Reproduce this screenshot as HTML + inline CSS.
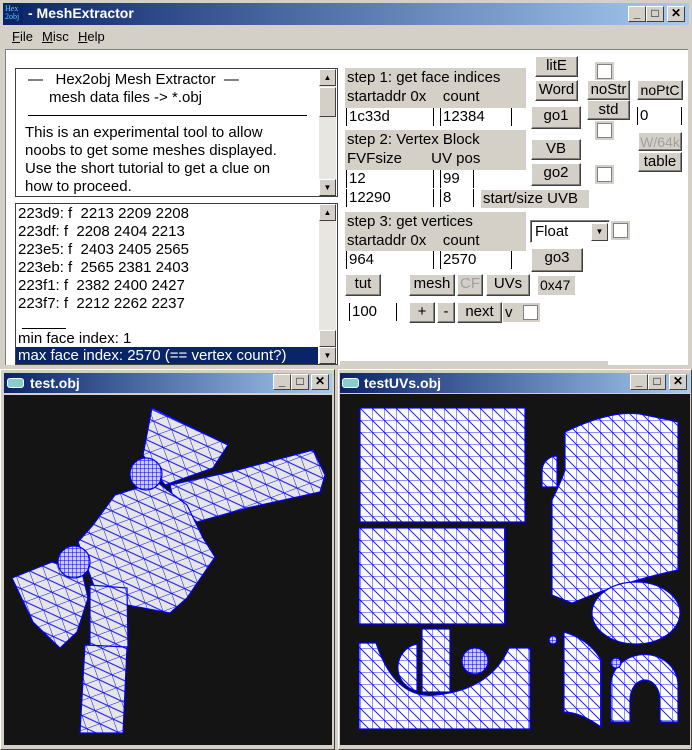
<!DOCTYPE html>
<html><head><meta charset="utf-8"><style>
*{margin:0;padding:0;box-sizing:border-box}
body{width:692px;height:750px;overflow:hidden;background:#d4d0c8;font-family:"Liberation Sans",sans-serif;position:relative}
.a{position:absolute}
.tb{position:absolute;background:linear-gradient(90deg,#0a246a,#a6caf0);color:#fff;font-weight:bold;font-size:14px;line-height:20px}
.btn{position:absolute;background:#d4d0c8;border:1px solid;border-color:#fff #404040 #404040 #fff;box-shadow:inset -1px -1px #808080;font-size:15px;text-align:center;color:#000;line-height:18px}
.wb{position:absolute;width:18px;height:16px;background:#d4d0c8;border:1px solid;border-color:#fff #404040 #404040 #fff;font-size:12px;line-height:13px;text-align:center;font-weight:bold;color:#000}
.lbl{position:absolute;background:#d4d0c8;font-size:15px;line-height:19px;padding-left:2px;color:#000}
.inp{position:absolute;background:#fff;border-left:1px solid #000;border-right:1px solid #000;font-size:15px;line-height:17px;padding-left:2px;height:18px}
.cb{position:absolute;width:15px;height:15px;background:#fff;border:1px solid #808080;outline:2px solid #d4d0c8}
.sb{position:absolute;width:17px;background:#e8e6e0}
.sa{position:absolute;width:17px;height:17px;background:#d4d0c8;border:1px solid;border-color:#fff #404040 #404040 #fff;font-size:8px;line-height:15px;text-align:center}
.txt{font-size:15px;line-height:18px;color:#000}
</style></head><body>
<div class="tb" style="left:3px;top:3px;width:686px;height:22px;padding-left:25px">- MeshExtractor</div>
<div class="a" style="left:5px;top:5px;width:18px;height:18px;background:#0a246a;color:#6cf;font-size:8px;line-height:8px;font-family:'Liberation Serif'">Hex<br>2obj</div>
<div class="wb" style="left:628px;top:6px">_</div><div class="wb" style="left:646px;top:6px">□</div><div class="wb" style="left:667px;top:6px">✕</div>
<div class="a" style="left:12px;top:29px;font-size:13px"><u>F</u>ile</div>
<div class="a" style="left:42px;top:29px;font-size:13px"><u>M</u>isc</div>
<div class="a" style="left:78px;top:29px;font-size:13px"><u>H</u>elp</div>
<div class="a" style="left:5px;top:49px;width:683px;height:316px;background:#fff;border-top:1px solid #808080;border-left:1px solid #808080"></div>
<div class="a" style="left:15px;top:68px;width:323px;height:129px;border:1px solid #404040;background:#fff;overflow:hidden">
 <div class="txt" style="position:absolute;left:12px;top:2px">—&nbsp;&nbsp; Hex2obj Mesh Extractor&nbsp; —</div>
 <div class="txt" style="position:absolute;left:33px;top:20px">mesh data files -&gt; *.obj</div>
 <div style="position:absolute;left:12px;top:46px;width:279px;border-top:1px solid #000"></div>
 <div class="txt" style="position:absolute;left:9px;top:55px">This is an experimental tool to allow<br>noobs to get some meshes displayed.<br>Use the short tutorial to get a clue on<br>how to proceed.</div>
 <div class="sb" style="left:303px;top:0;height:127px"></div>
 <div class="sa" style="left:303px;top:0">▲</div>
 <div class="sa" style="left:303px;top:18px;height:30px"></div>
 <div class="sa" style="left:303px;top:110px">▼</div>
</div>
<div class="a" style="left:15px;top:203px;width:323px;height:162px;border:1px solid #404040;background:#fff;overflow:hidden">
 <div class="txt" style="position:absolute;left:2px;top:1px">223d9: f&nbsp; 2213 2209 2208<br>223df: f&nbsp; 2208 2404 2213<br>223e5: f&nbsp; 2403 2405 2565<br>223eb: f&nbsp; 2565 2381 2403<br>223f1: f&nbsp; 2382 2400 2427<br>223f7: f&nbsp; 2212 2262 2237</div>
 <div style="position:absolute;left:6px;top:124px;width:44px;border-top:1px solid #000"></div>
 <div class="txt" style="position:absolute;left:2px;top:126px">min face index: 1</div>
 <div class="txt" style="position:absolute;left:0;top:143px;width:302px;height:18px;background:#0a246a;color:#fff;padding-left:2px">max face index: 2570 (== vertex count?)</div>
 <div class="sb" style="left:303px;top:0;height:160px"></div>
 <div class="sa" style="left:303px;top:0">▲</div>
 <div class="sa" style="left:303px;top:126px;height:17px"></div>
 <div class="sa" style="left:303px;top:143px">▼</div>
</div>
<div class="lbl" style="left:345px;top:68px;width:181px;height:40px">step 1: get face indices<br>startaddr 0x&nbsp;&nbsp;&nbsp; count</div>
<div class="inp" style="left:346px;top:108px;width:88px">1c33d</div>
<div class="inp" style="left:440px;top:108px;width:72px">12384</div>
<div class="btn" style="left:535px;top:56px;width:43px;height:21px">litE</div>
<div class="btn" style="left:535px;top:80px;width:43px;height:21px">Word</div>
<div class="btn" style="left:531px;top:106px;width:50px;height:23px">go1</div>
<div class="cb" style="left:597px;top:64px"></div>
<div class="btn" style="left:587px;top:80px;width:43px;height:20px">noStr</div>
<div class="btn" style="left:587px;top:100px;width:43px;height:20px">std</div>
<div class="cb" style="left:597px;top:123px"></div>
<div class="btn" style="left:637px;top:80px;width:46px;height:20px;font-size:14px">noPtC</div>
<div class="inp" style="left:637px;top:107px;width:45px">0</div>
<div class="btn" style="left:638px;top:132px;width:44px;height:19px;color:#a0a0a0;font-size:14px">W/64k</div>
<div class="btn" style="left:638px;top:152px;width:44px;height:20px">table</div>
<div class="lbl" style="left:345px;top:130px;width:181px;height:40px">step 2: Vertex Block<br>FVFsize&nbsp;&nbsp;&nbsp;&nbsp;&nbsp;&nbsp; UV pos</div>
<div class="inp" style="left:346px;top:170px;width:88px">12</div>
<div class="inp" style="left:440px;top:170px;width:34px">99</div>
<div class="inp" style="left:346px;top:189px;width:88px">12290</div>
<div class="inp" style="left:440px;top:189px;width:34px">8</div>
<div class="lbl" style="left:481px;top:190px;width:108px;height:18px;line-height:18px">start/size UVB</div>
<div class="btn" style="left:531px;top:139px;width:50px;height:21px">VB</div>
<div class="btn" style="left:531px;top:163px;width:50px;height:23px">go2</div>
<div class="cb" style="left:597px;top:167px"></div>
<div class="lbl" style="left:345px;top:212px;width:181px;height:39px">step 3: get vertices<br>startaddr 0x&nbsp;&nbsp;&nbsp; count</div>
<div class="a" style="left:530px;top:220px;width:80px;height:23px;background:#fff;border:1px solid;border-color:#808080 #fff #fff #808080;box-shadow:inset 1px 1px #404040;font-size:15px;line-height:21px;padding-left:4px">Float<div class="sa" style="left:60px;top:2px;height:18px;width:17px">▼</div></div>
<div class="cb" style="left:613px;top:223px"></div>
<div class="inp" style="left:346px;top:251px;width:88px">964</div>
<div class="inp" style="left:440px;top:251px;width:72px">2570</div>
<div class="btn" style="left:531px;top:248px;width:52px;height:24px">go3</div>
<div class="btn" style="left:345px;top:274px;width:36px;height:22px">tut</div>
<div class="btn" style="left:409px;top:274px;width:46px;height:22px">mesh</div>
<div class="btn" style="left:457px;top:274px;width:26px;height:22px;color:#a0a0a0">CF</div>
<div class="btn" style="left:486px;top:274px;width:44px;height:22px">UVs</div>
<div class="lbl" style="left:538px;top:276px;width:37px;height:19px;font-size:14px">0x47</div>
<div class="inp" style="left:349px;top:303px;width:48px">100</div>
<div class="btn" style="left:409px;top:302px;width:26px;height:21px">+</div>
<div class="btn" style="left:437px;top:302px;width:18px;height:21px">-</div>
<div class="btn" style="left:457px;top:302px;width:45px;height:21px">next</div>
<div class="lbl" style="left:503px;top:303px;width:18px;height:19px">v</div>
<div class="cb" style="left:523px;top:305px"></div>
<div class="a" style="left:340px;top:361px;width:268px;height:5px;background:#d4d0c8"></div>

<div class="a" style="left:0;top:369px;width:335px;height:381px;background:#d4d0c8;border:1px solid;border-color:#fff #404040 #404040 #fff"></div>
<div class="tb" style="left:4px;top:373px;width:328px;height:20px;padding-left:26px">test.obj</div>
<div class="a" style="left:7px;top:378px;width:17px;height:10px;background:#8cc;border:1px solid #fff;border-radius:3px"></div>
<div class="wb" style="left:273px;top:374px">_</div><div class="wb" style="left:291px;top:374px">□</div><div class="wb" style="left:311px;top:374px">✕</div>
<div class="a" style="left:338px;top:369px;width:354px;height:381px;background:#d4d0c8;border:1px solid;border-color:#fff #404040 #404040 #fff"></div>
<div class="tb" style="left:340px;top:373px;width:350px;height:20px;padding-left:24px">testUVs.obj</div>
<div class="a" style="left:342px;top:378px;width:17px;height:10px;background:#8cc;border:1px solid #fff;border-radius:3px"></div>
<div class="wb" style="left:630px;top:374px">_</div><div class="wb" style="left:648px;top:374px">□</div><div class="wb" style="left:669px;top:374px">✕</div>

<svg class="a" style="left:0;top:0" width="692" height="750">
<defs>
<pattern id="m" width="14" height="14" patternUnits="userSpaceOnUse" patternTransform="rotate(-20)"><rect width="14" height="14" fill="#e6e6e6"/><path d="M0 0H14M0 0V14M0 0L14 14" stroke="#1010f0" stroke-width="1"/></pattern>
<pattern id="u" width="12" height="12" patternUnits="userSpaceOnUse"><rect width="12" height="12" fill="#fff"/><path d="M0 0H12M0 0V12M0 0L12 12" stroke="#2020ff" stroke-width="1"/></pattern>
<pattern id="d" width="4" height="4" patternUnits="userSpaceOnUse"><rect width="4" height="4" fill="#ccd"/><path d="M0 0H4M0 0V4" stroke="#00f"/></pattern>
</defs>
<rect x="4" y="395" width="328" height="350" fill="#141414"/>
<rect x="340" y="394" width="350" height="351" fill="#141414"/>
<g stroke="#00f" stroke-width="1.2" fill="url(#m)">
<polygon points="152,408 228,445 213,468 165,485 143,455"/>
<polygon points="170,485 230,472 313,450 325,475 320,492 247,508 197,522 173,498"/>
<polygon points="115,495 157,482 187,505 203,538 215,557 187,598 170,613 127,605 97,595 78,542 93,525"/>
<polygon points="12,578 52,562 82,572 88,598 77,632 60,648 33,622"/>
<polygon points="90,585 127,588 128,648 90,652"/>
<polygon points="85,645 127,647 123,733 80,733"/>
<circle cx="146" cy="474" r="16" fill="url(#d)"/>
<circle cx="74" cy="562" r="16" fill="url(#d)"/>
</g>
<g stroke="#00f" stroke-width="1.2" fill="url(#u)">
<rect x="360" y="408" width="165" height="114"/>
<rect x="359" y="528" width="146" height="96"/>
<path d="M359,643 L376,643 Q395,700 436,695 Q490,690 509,648 L530,648 L530,729 L359,729 Z"/>
<path d="M417,644 A24,24 0 0 0 417,691 Z"/>
<rect x="422" y="629" width="28" height="63"/>
<circle cx="475" cy="661" r="13" fill="url(#d)"/>
<path d="M565,432 Q610,410 640,414 Q660,418 678,422 L678,570 Q640,578 600,592 L572,603 L552,595 L552,500 Q562,480 565,470 Z"/>
<path d="M557,456 A15,15 0 0 0 542,471 L542,487 L557,487 Z"/>
<ellipse cx="636" cy="613" rx="44" ry="31"/>
<path d="M564,632 Q590,640 601,660 L601,727 Q580,712 564,712 Z"/>
<path d="M611,722 L611,685 A33,30 0 0 1 678,685 L678,722 L660,722 L660,700 A15,20 0 0 0 630,700 L630,722 Z"/>
<circle cx="553" cy="640" r="4" fill="url(#d)"/>
<circle cx="616" cy="663" r="5" fill="url(#d)"/>
</g>
</svg>
</body></html>
